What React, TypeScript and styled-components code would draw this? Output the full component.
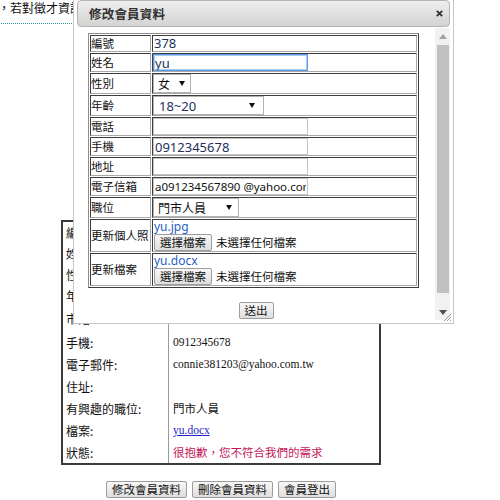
import React from "react";
import styled, { createGlobalStyle } from "styled-components";

const GlobalStyle = createGlobalStyle`
  html, body {
    margin: 0;
    padding: 0;
    background: #fff;
  }
  body {
    font-family: "Noto Sans CJK TC", "Noto Sans", sans-serif;
    color: #111;
  }
`;

const cjk = `"Noto Sans CJK TC", "Noto Sans", sans-serif`;
const latin = `"Noto Sans", "Noto Sans CJK TC", sans-serif`;
const serif = `"Liberation Serif", "Noto Sans CJK TC", serif`;

const Page = styled.div`
  position: relative;
  width: 500px;
  height: 500px;
  overflow: hidden;
`;

/* ---------- page behind the dialog ---------- */

const Notice = styled.div`
  width: 300px;
  height: 23px;
  margin-left: -2px;
  border-bottom: 1px dotted #2f9696;
  font-family: ${cjk};
  font-size: 12px;
  line-height: 16px;
  white-space: nowrap;
  overflow: hidden;
`;

const ProfileBox = styled.div`
  margin: 196px 0 0 61px;
  width: 320px;
  box-sizing: border-box;
  border: 2px solid #3a3a3a;
  display: grid;
  grid-template-columns: 106px 1fr;
  grid-template-rows: repeat(4, 21px) 25px repeat(6, 22px);
`;

const ProfileLabel = styled.div`
  border-right: 1px solid #9a9a9a;
  padding-left: 3px;
  display: flex;
  align-items: center;
  font-family: ${cjk};
  font-size: 12px;
  white-space: nowrap;
  color: #111;
`;

const ProfileValue = styled.div<{ $tone?: "plain" | "link" | "alert" }>`
  padding-left: 4px;
  display: flex;
  align-items: center;
  font-family: ${serif};
  font-size: 11.5px;
  white-space: nowrap;
  color: ${(p) => (p.$tone === "alert" ? "#c4175a" : p.$tone === "link" ? "#2323c8" : "#111")};
  text-decoration: ${(p) => (p.$tone === "link" ? "underline" : "none")};
`;

const ActionBar = styled.div`
  width: 320px;
  margin: 16px 0 0 61px;
  display: flex;
  justify-content: center;
  gap: 5px;
`;

const PlainButton = styled.button`
  height: 17px;
  padding: 0 5px;
  margin: 0;
  border: 1px solid #9d9d9d;
  border-radius: 2px;
  background: linear-gradient(#f8f8f8, #dddddd);
  font-family: ${cjk};
  font-size: 11.5px;
  line-height: 15px;
  color: #111;
  white-space: nowrap;
`;

/* ---------- dialog window ---------- */

const Dialog = styled.div`
  position: absolute;
  left: 73px;
  top: -4px;
  width: 381px;
  height: 328px;
  box-sizing: border-box;
  border: 1px solid #c6c6c6;
  padding: 3px;
  background: #fff;
  display: flex;
  flex-direction: column;
`;

const TitleBar = styled.div`
  height: 27px;
  flex: none;
  box-sizing: border-box;
  border: 1px solid #b4b4b4;
  border-radius: 4px;
  background: linear-gradient(#eeeeee, #d3d3d3);
  display: flex;
  align-items: center;
  justify-content: space-between;
  padding: 0 6px 0 11px;
`;

const Title = styled.span`
  font-family: ${cjk};
  font-weight: bold;
  font-size: 12.5px;
  color: #333;
  letter-spacing: 0.2px;
`;

const CloseButton = styled.span`
  width: 8px;
  height: 8px;
  display: flex;
  align-items: center;
  justify-content: center;
`;

const DialogBody = styled.div`
  flex: 1;
  min-height: 0;
  margin-top: 1px;
  display: flex;
`;

const ScrollArea = styled.div`
  flex: 1;
  overflow: hidden;
  padding: 5px 11px 0;
`;

const ScrollBar = styled.div`
  width: 15px;
  flex: none;
  background: #f1f1f1;
  display: flex;
  flex-direction: column;
`;

const ScrollArrow = styled.div<{ $h: number }>`
  height: ${(p) => p.$h}px;
  display: flex;
  align-items: center;
  justify-content: center;
`;

const ScrollThumb = styled.div`
  height: 248px;
  margin: 0 1px 0 2px;
  background: #c1c1c1;
`;

const ScrollGap = styled.div`
  flex: 1;
`;

const ResizeGrip = styled.svg`
  position: absolute;
  right: 2px;
  bottom: 2px;
`;

/* ---------- edit form ---------- */

const FormTable = styled.table`
  border-collapse: separate;
  border-spacing: 1px;
  border: 1px solid;
  border-color: #8c8c8c #3c3c3c #3c3c3c #8c8c8c;
  width: 331px;
`;

const LabelCell = styled.td`
  width: 59px;
  padding: 0;
  border: 1px solid;
  border-color: #3c3c3c #a8a8a8 #a8a8a8 #3c3c3c;
  font-family: ${cjk};
  font-size: 11.5px;
  line-height: 15px;
  white-space: nowrap;
  color: #111;
`;

const ValueCell = styled.td`
  padding: 0;
  border: 1px solid;
  border-color: #3c3c3c #a8a8a8 #a8a8a8 #3c3c3c;
  font-family: ${latin};
  font-size: 13px;
  line-height: 15px;
  color: #22305a;
  white-space: nowrap;
`;

const PlainValue = styled.span`
  padding-left: 1px;
`;

const TextInput = styled.input<{ $focus?: boolean; $small?: boolean }>`
  display: block;
  width: 155px;
  height: 17px;
  box-sizing: border-box;
  margin: 0;
  padding: 0 1px;
  border: 1px solid ${(p) => (p.$focus ? "#5b9be8" : "#c4c4c4")};
  box-shadow: ${(p) => (p.$focus ? "inset 0 0 0 1px #a9cbf2" : "none")};
  outline: none;
  font-family: ${latin};
  font-size: ${(p) => (p.$small ? "11.5px" : "13px")};
  color: ${(p) => (p.$small ? "#111" : "#22305a")};
  background: #fff;
`;

const SelectWrap = styled.span<{ $w: number; $arrow: number }>`
  position: relative;
  display: block;
  width: ${(p) => p.$w}px;
  height: 19px;
  &::after {
    content: "";
    position: absolute;
    right: ${(p) => p.$arrow}px;
    top: 7px;
    border-left: 3.5px solid transparent;
    border-right: 3.5px solid transparent;
    border-top: 5px solid #111;
    pointer-events: none;
  }
`;

const Select = styled.select<{ $cjk?: boolean }>`
  appearance: none;
  -webkit-appearance: none;
  display: block;
  width: 100%;
  height: 100%;
  box-sizing: border-box;
  margin: 0;
  padding: 0 0 0 ${(p) => (p.$cjk ? 4 : 5)}px;
  border: 1px solid #b3b3b3;
  border-radius: 0;
  background: #fff;
  font-family: ${(p) => (p.$cjk ? cjk : latin)};
  font-size: ${(p) => (p.$cjk ? "12px" : "13px")};
  color: ${(p) => (p.$cjk ? "#111" : "#22305a")};
  outline: none;
`;

const FileName = styled.div`
  font-family: ${latin};
  font-size: 12px;
  line-height: 14px;
  color: #1f5fc4;
  padding-left: 1px;
`;

const FilePicker = styled.div`
  display: flex;
  align-items: center;
  gap: 4px;
  padding-left: 1px;
`;

const PickerNote = styled.span`
  font-family: ${cjk};
  font-size: 11.5px;
  color: #111;
`;

const SubmitRow = styled.div`
  display: flex;
  justify-content: center;
  margin-top: 14px;
`;

type Row = { label: string; value: string; tone?: "plain" | "link" | "alert" };

const profileRows: Row[] = [
  { label: "編號:", value: "378" },
  { label: "姓名:", value: "yu" },
  { label: "性別:", value: "女" },
  { label: "年齡:", value: "18~20" },
  { label: "市話:", value: "" },
  { label: "手機:", value: "0912345678" },
  { label: "電子郵件:", value: "connie381203@yahoo.com.tw" },
  { label: "住址:", value: "" },
  { label: "有興趣的職位:", value: "門市人員" },
  { label: "檔案:", value: "yu.docx", tone: "link" },
  { label: "狀態:", value: "很抱歉，您不符合我們的需求", tone: "alert" },
];

function CloseIcon() {
  return (
    <svg width="7" height="7" viewBox="0 0 7 7">
      <path d="M0.8 0.8 L6.2 6.2 M6.2 0.8 L0.8 6.2" stroke="#333" strokeWidth="1.8" />
    </svg>
  );
}

function Arrow({ up, color }: { up?: boolean; color: string }) {
  return (
    <svg width="8" height="5" viewBox="0 0 8 5">
      <path d={up ? "M0 5 L4 0 L8 5 Z" : "M0 0 L8 0 L4 5 Z"} fill={color} />
    </svg>
  );
}

export default function App() {
  return (
    <>
      <GlobalStyle />
      <Page>
        <Notice>，若對徵才資訊有任何疑問，歡迎來信詢問。</Notice>

        <ProfileBox>
          {profileRows.map((r) => (
            <React.Fragment key={r.label}>
              <ProfileLabel>{r.label}</ProfileLabel>
              <ProfileValue $tone={r.tone}>{r.value}</ProfileValue>
            </React.Fragment>
          ))}
        </ProfileBox>

        <ActionBar>
          <PlainButton>修改會員資料</PlainButton>
          <PlainButton>刪除會員資料</PlainButton>
          <PlainButton>會員登出</PlainButton>
        </ActionBar>

        <Dialog>
          <TitleBar>
            <Title>修改會員資料</Title>
            <CloseButton>
              <CloseIcon />
            </CloseButton>
          </TitleBar>
          <DialogBody>
            <ScrollArea>
              <FormTable>
                <tbody>
                  <tr>
                    <LabelCell>編號</LabelCell>
                    <ValueCell>
                      <PlainValue>378</PlainValue>
                    </ValueCell>
                  </tr>
                  <tr>
                    <LabelCell>姓名</LabelCell>
                    <ValueCell>
                      <TextInput $focus defaultValue="yu" />
                    </ValueCell>
                  </tr>
                  <tr>
                    <LabelCell>性別</LabelCell>
                    <ValueCell>
                      <SelectWrap $w={38} $arrow={6}>
                        <Select $cjk defaultValue="女">
                          <option>男</option>
                          <option>女</option>
                        </Select>
                      </SelectWrap>
                    </ValueCell>
                  </tr>
                  <tr>
                    <LabelCell>年齡</LabelCell>
                    <ValueCell>
                      <SelectWrap $w={111} $arrow={9}>
                        <Select defaultValue="18~20">
                          <option>18~20</option>
                          <option>21~25</option>
                          <option>26~30</option>
                        </Select>
                      </SelectWrap>
                    </ValueCell>
                  </tr>
                  <tr>
                    <LabelCell>電話</LabelCell>
                    <ValueCell>
                      <TextInput defaultValue="" />
                    </ValueCell>
                  </tr>
                  <tr>
                    <LabelCell>手機</LabelCell>
                    <ValueCell>
                      <TextInput defaultValue="0912345678" />
                    </ValueCell>
                  </tr>
                  <tr>
                    <LabelCell>地址</LabelCell>
                    <ValueCell>
                      <TextInput defaultValue="" />
                    </ValueCell>
                  </tr>
                  <tr>
                    <LabelCell>電子信箱</LabelCell>
                    <ValueCell>
                      <TextInput $small defaultValue="a091234567890 @yahoo.com.tw" />
                    </ValueCell>
                  </tr>
                  <tr>
                    <LabelCell>職位</LabelCell>
                    <ValueCell>
                      <SelectWrap $w={86} $arrow={7}>
                        <Select $cjk defaultValue="門市人員">
                          <option>門市人員</option>
                          <option>行政人員</option>
                        </Select>
                      </SelectWrap>
                    </ValueCell>
                  </tr>
                  <tr>
                    <LabelCell>更新個人照</LabelCell>
                    <ValueCell>
                      <FileName>yu.jpg</FileName>
                      <FilePicker>
                        <PlainButton>選擇檔案</PlainButton>
                        <PickerNote>未選擇任何檔案</PickerNote>
                      </FilePicker>
                    </ValueCell>
                  </tr>
                  <tr>
                    <LabelCell>更新檔案</LabelCell>
                    <ValueCell>
                      <FileName>yu.docx</FileName>
                      <FilePicker>
                        <PlainButton>選擇檔案</PlainButton>
                        <PickerNote>未選擇任何檔案</PickerNote>
                      </FilePicker>
                    </ValueCell>
                  </tr>
                </tbody>
              </FormTable>
              <SubmitRow>
                <PlainButton>送出</PlainButton>
              </SubmitRow>
            </ScrollArea>
            <ScrollBar>
              <ScrollArrow $h={17}>
                <Arrow up color="#a3a3a3" />
              </ScrollArrow>
              <ScrollThumb />
              <ScrollGap />
              <ScrollArrow $h={15}>
                <Arrow color="#505050" />
              </ScrollArrow>
            </ScrollBar>
          </DialogBody>
          <ResizeGrip width="8" height="8" viewBox="0 0 8 8">
            <path d="M8 1 L1 8 M8 4 L4 8 M8 7 L7 8" stroke="#9a9a9a" strokeWidth="1" />
          </ResizeGrip>
        </Dialog>
      </Page>
    </>
  );
}
